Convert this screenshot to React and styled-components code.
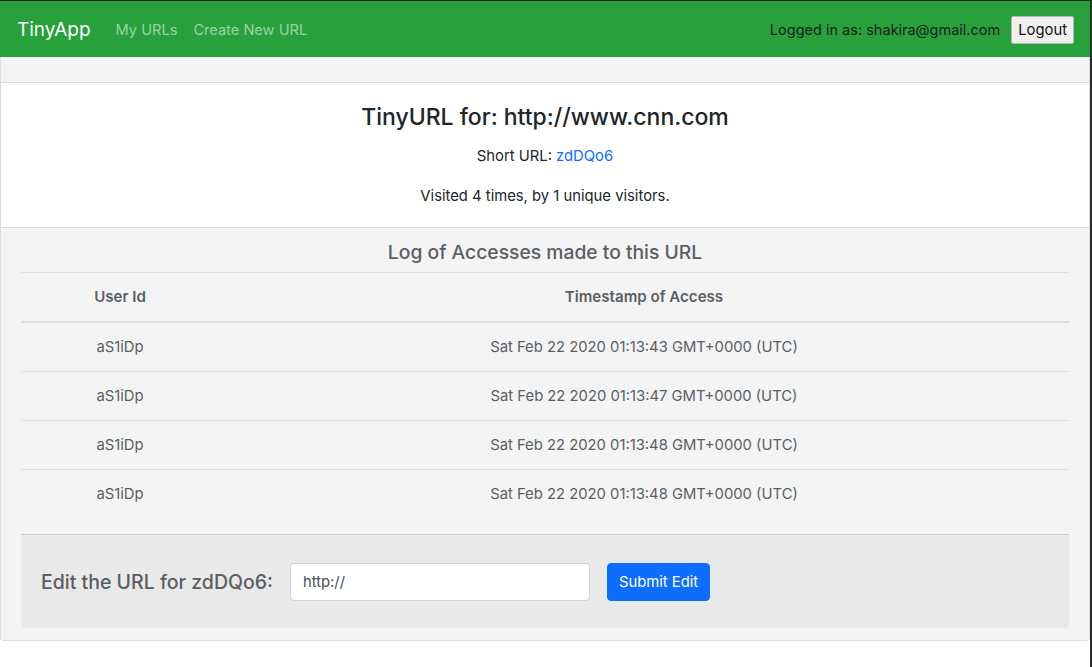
import React from "react";
import styled, { createGlobalStyle } from "styled-components";

const GlobalStyle = createGlobalStyle`
  html, body {
    margin: 0;
    padding: 0;
    background: #ffffff;
  }
  body {
    font-family: "Inter", "Helvetica Neue", Arial, sans-serif;
    font-size: 14.8px;
    line-height: 24px;
    color: #212529;
  }
  * {
    box-sizing: border-box;
  }
`;

const Page = styled.div`
  min-height: 100vh;
  border-top: 1px solid #1e1e1e;
  border-right: 2px solid #2b2b2b;
`;

const Navbar = styled.nav`
  display: flex;
  align-items: center;
  justify-content: space-between;
  height: 56px;
  padding: 1px 16px 0 17px;
  background: #28a03c;
`;

const NavLeft = styled.div`
  display: flex;
  align-items: center;
`;

const Brand = styled.a`
  font-size: 19px;
  color: #ffffff;
  text-decoration: none;
  margin-right: 25px;
`;

const NavLink = styled.a`
  font-size: 14.6px;
  color: rgba(255, 255, 255, 0.55);
  text-decoration: none;
  margin-right: 16px;
`;

const NavRight = styled.div`
  display: flex;
  align-items: center;
  gap: 11px;
  font-size: 14.5px;
  color: #1b1f1c;
`;

const LogoutButton = styled.button`
  font-family: inherit;
  font-size: 14.8px;
  color: #111;
  background: #f0f0f0;
  border: 1px solid #b5b5b5;
  border-radius: 2px;
  height: 28px;
  padding: 0 6px;
`;

const Card = styled.div`
  border: 1px solid #dcdcdc;
  border-top: none;
  border-radius: 0 0 4px 4px;
`;

const CardHeader = styled.div`
  height: 26px;
  background: #f4f4f4;
  border-bottom: 1px solid #dadada;
`;

const CardBody = styled.div`
  padding: 20px 20px 3px;
  text-align: center;
  background: #ffffff;
`;

const Title = styled.h4`
  margin: 0 0 12px;
  font-size: 23px;
  line-height: 29px;
  font-weight: 500;
`;

const Text = styled.p`
  margin: 0 0 16px;
`;

const ShortLink = styled.a`
  color: #0d6efd;
  text-decoration: none;
`;

const CardFooter = styled.div`
  padding: 12px 20px 12px;
  background: #f4f4f4;
  border-top: 1px solid #dadada;
  border-radius: 0 0 4px 4px;
  color: #5a5f65;
`;

const LogTitle = styled.h5`
  margin: 0 0 8px;
  text-align: center;
  font-size: 19.3px;
  line-height: 24px;
  font-weight: 500;
`;

const Table = styled.table`
  width: 100%;
  border-collapse: collapse;
  margin-bottom: 16px;
`;

const Th = styled.th`
  width: ${(p) => p.$width || "auto"};
  padding: 12px;
  font-size: 15.1px;
  font-weight: 600;
  text-align: center;
  border-top: 1px solid #dcdfe3;
  border-bottom: 2px solid #dcdfe3;
`;

const Td = styled.td`
  padding: 12px;
  text-align: center;
  border-top: ${(p) => (p.$first ? "none" : "1px solid #dcdfe3")};
`;

const EditBox = styled.form`
  display: flex;
  align-items: center;
  gap: 17px;
  padding: 28px 20px 27px;
  background: #e9e9e9;
  border-top: 1px solid #cfcfcf;
  border-radius: 0 0 4px 4px;
`;

const EditLabel = styled.label`
  font-size: 19.5px;
  font-weight: 500;
  color: #595e64;
`;

const UrlInput = styled.input`
  width: 300px;
  height: 38px;
  padding: 6px 12px;
  font-family: inherit;
  font-size: 14.8px;
  color: #495057;
  background: #ffffff;
  border: 1px solid #ced4da;
  border-radius: 4px;
`;

const SubmitButton = styled.button`
  height: 38px;
  padding: 0 11px;
  font-family: inherit;
  font-size: 14.8px;
  color: #ffffff;
  background: #0d6efd;
  border: 1px solid #0d6efd;
  border-radius: 4px;
`;

const visits = [
  { user: "aS1iDp", time: "Sat Feb 22 2020 01:13:43 GMT+0000 (UTC)" },
  { user: "aS1iDp", time: "Sat Feb 22 2020 01:13:47 GMT+0000 (UTC)" },
  { user: "aS1iDp", time: "Sat Feb 22 2020 01:13:48 GMT+0000 (UTC)" },
  { user: "aS1iDp", time: "Sat Feb 22 2020 01:13:48 GMT+0000 (UTC)" },
];

export default function App() {
  return (
    <Page>
      <GlobalStyle />
      <Navbar>
        <NavLeft>
          <Brand href="#">TinyApp</Brand>
          <NavLink href="#">My URLs</NavLink>
          <NavLink href="#">Create New URL</NavLink>
        </NavLeft>
        <NavRight>
          <span>Logged in as: shakira@gmail.com</span>
          <LogoutButton type="button">Logout</LogoutButton>
        </NavRight>
      </Navbar>

      <Card>
        <CardHeader />
        <CardBody>
          <Title>TinyURL for: http://www.cnn.com</Title>
          <Text>
            Short URL: <ShortLink href="#">zdDQo6</ShortLink>
          </Text>
          <Text>Visited 4 times, by 1 unique visitors.</Text>
        </CardBody>
        <CardFooter>
          <LogTitle>Log of Accesses made to this URL</LogTitle>
          <Table>
            <thead>
              <tr>
                <Th $width="198px">User Id</Th>
                <Th>Timestamp of Access</Th>
              </tr>
            </thead>
            <tbody>
              {visits.map((v, i) => (
                <tr key={i}>
                  <Td $first={i === 0}>{v.user}</Td>
                  <Td $first={i === 0}>{v.time}</Td>
                </tr>
              ))}
            </tbody>
          </Table>
          <EditBox onSubmit={(e) => e.preventDefault()}>
            <EditLabel htmlFor="longURL">Edit the URL for zdDQo6:</EditLabel>
            <UrlInput id="longURL" type="text" defaultValue="http://" />
            <SubmitButton type="submit">Submit Edit</SubmitButton>
          </EditBox>
        </CardFooter>
      </Card>
    </Page>
  );
}
